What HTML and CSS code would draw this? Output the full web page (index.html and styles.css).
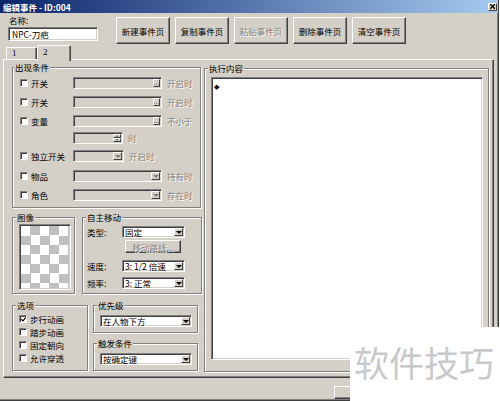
FILE: index.html
```html
<!DOCTYPE html>
<html lang="zh">
<head>
    <meta charset="UTF-8">
    <title>编辑事件</title>
    <link rel="stylesheet" href="styles.css">
</head>
<body>

<div class="window">
    <div class="titlebar">
        <span class="title">编辑事件 - ID:004</span>
        <span class="close-btn">
            <svg width="5" height="5" viewBox="0 0 5 5"><path d="M0 0L5 5M5 0L0 5" stroke="#000" stroke-width="1.3"/></svg>
        </span>
    </div>

    <!-- name + page buttons -->
    <div class="header">
        <div class="name-block">
            <div class="name-label">名称:</div>
            <div class="sunken name-input">NPC-刀疤</div>
        </div>
        <div class="page-buttons">
            <div class="btn page-btn">新建事件页</div>
            <div class="btn page-btn">复制事件页</div>
            <div class="btn page-btn disabled">粘贴事件页</div>
            <div class="btn page-btn">删除事件页</div>
            <div class="btn page-btn">清空事件页</div>
        </div>
    </div>

    <div class="tabs">
        <div class="tab">1</div>
        <div class="tab active">2</div>
    </div>

    <div class="panel">
        <div class="left-col">
            <fieldset class="group cond-group">
                <legend>出现条件</legend>
                <div class="cond-body">
                    <div class="cond-row">
                        <span class="chk-label"><span class="chk"></span>开关</span>
                        <div class="sunken combo off wide"><span class="val"></span><span class="drop dots"></span></div>
                        <span class="note disabled">开启时</span>
                    </div>
                    <div class="cond-row gap7">
                        <span class="chk-label"><span class="chk"></span>开关</span>
                        <div class="sunken combo off wide"><span class="val"></span><span class="drop dots"></span></div>
                        <span class="note disabled">开启时</span>
                    </div>
                    <div class="cond-row gap7">
                        <span class="chk-label"><span class="chk"></span>变量</span>
                        <div class="sunken combo off wide"><span class="val"></span><span class="drop dots"></span></div>
                        <span class="note disabled">不小于</span>
                    </div>
                    <div class="cond-row gap5 indent">
                        <div class="sunken spin off"><span class="val"></span><span class="spin-btns"><span class="spin-btn up"></span><span class="spin-btn down"></span></span></div>
                        <span class="note disabled">时</span>
                    </div>
                    <div class="cond-row gap6">
                        <span class="chk-label"><span class="chk"></span>独立开关</span>
                        <div class="sunken combo off short"><span class="val"></span><span class="drop"></span></div>
                        <span class="note disabled">开启时</span>
                    </div>
                    <div class="cond-row gap8">
                        <span class="chk-label"><span class="chk"></span>物品</span>
                        <div class="sunken combo off wide"><span class="val"></span><span class="drop"></span></div>
                        <span class="note disabled">持有时</span>
                    </div>
                    <div class="cond-row gap7">
                        <span class="chk-label"><span class="chk"></span>角色</span>
                        <div class="sunken combo off wide"><span class="val"></span><span class="drop"></span></div>
                        <span class="note disabled">存在时</span>
                    </div>
                </div>
            </fieldset>

            <div class="mid-row">
                <fieldset class="group image-group">
                    <legend>图像</legend>
                    <div class="image-body">
                        <div class="sunken checker"></div>
                    </div>
                </fieldset>

                <fieldset class="group move-group">
                    <legend>自主移动</legend>
                    <div class="move-body">
                        <div class="move-row">
                            <span class="move-label">类型:</span>
                            <div class="sunken combo move-combo"><span class="val">固定</span><span class="drop"></span></div>
                        </div>
                        <div class="btn route-btn disabled">移动路线...</div>
                        <div class="move-row gap7">
                            <span class="move-label">速度:</span>
                            <div class="sunken combo move-combo"><span class="val">3: 1/2 倍速</span><span class="drop"></span></div>
                        </div>
                        <div class="move-row gap5">
                            <span class="move-label">频率:</span>
                            <div class="sunken combo move-combo"><span class="val">3: 正常</span><span class="drop"></span></div>
                        </div>
                    </div>
                </fieldset>
            </div>

            <div class="bottom-row">
                <fieldset class="group options-group">
                    <legend>选项</legend>
                    <div class="options-body">
                        <div class="opt-row"><span class="chk checked"><svg width="5" height="5" viewBox="0 0 5 5"><path d="M0.3 2.2L2 3.9L4.7 0.6" fill="none" stroke="#000" stroke-width="1.2"/></svg></span>步行动画</div>
                        <div class="opt-row"><span class="chk"></span>踏步动画</div>
                        <div class="opt-row"><span class="chk"></span>固定朝向</div>
                        <div class="opt-row"><span class="chk"></span>允许穿透</div>
                    </div>
                </fieldset>

                <div class="stack">
                    <fieldset class="group small-group">
                        <legend>优先级</legend>
                        <div class="small-body">
                            <div class="sunken combo small-combo"><span class="val">在人物下方</span><span class="drop"></span></div>
                        </div>
                    </fieldset>
                    <fieldset class="group small-group trigger">
                        <legend>触发条件</legend>
                        <div class="small-body">
                            <div class="sunken combo small-combo"><span class="val">按确定键</span><span class="drop"></span></div>
                        </div>
                    </fieldset>
                </div>
            </div>
        </div>

        <fieldset class="group content-group">
            <legend>执行内容</legend>
            <div class="content-body">
                <div class="sunken command-list"><span class="mark">◆</span></div>
            </div>
        </fieldset>
    </div>

    <div class="footer">
        <div class="btn foot-btn">确定</div>
        <div class="btn foot-btn">取消</div>
    </div>
</div>

<div class="watermark">软件技巧</div>

</body>
</html>
```

FILE: styles.css
```css
* {
    box-sizing: border-box;
}

body {
    margin: 0;
    background-color: #fff;
    font-family: "Noto Sans CJK SC", "Liberation Sans", sans-serif;
    font-size: 8.5px;
    line-height: 10px;
    color: #000;
}

.window {
    width: 499px;
    height: 401px;
    background-color: #d4d0c8;
    border-right: 1px solid #404040;
    border-bottom: 1px solid #404040;
    box-shadow: inset -1px -1px 0 #808080;
    overflow: hidden;
}

.titlebar {
    height: 13px;
    display: flex;
    align-items: center;
    justify-content: space-between;
    padding: 0 1px 0 3px;
    background: linear-gradient(to right, #0a246a, #a6caf0);
    color: #fff;
    font-weight: bold;
}

.close-btn {
    width: 9px;
    height: 8px;
    display: flex;
    align-items: center;
    justify-content: center;
    background-color: #d4d0c8;
    border: 1px solid;
    border-color: #fff #404040 #404040 #fff;
}

/* classic 3d look */
.btn {
    display: flex;
    align-items: center;
    justify-content: center;
    background-color: #d4d0c8;
    border: 1px solid;
    border-color: #fff #404040 #404040 #fff;
    box-shadow: inset -1px -1px 0 #808080;
}

.sunken {
    border: 1px solid;
    border-color: #808080 #fff #fff #808080;
    box-shadow: inset 1px 1px 0 #404040, inset -1px -1px 0 #d4d0c8;
    background-color: #fff;
}

.disabled {
    color: #808080;
    text-shadow: 1px 1px 0 #fff;
}

.header {
    height: 32px;
    display: flex;
    padding: 2px 0 0 8px;
}

.name-block {
    width: 90px;
}

.name-label {
    height: 11px;
    padding-left: 1px;
}

.name-input {
    margin-top: 1px;
    height: 14px;
    padding: 1px 0 0 3px;
}

.page-buttons {
    display: flex;
    gap: 5px;
    margin-left: 18px;
    margin-top: 2px;
}

.page-btn {
    width: 54px;
    height: 27px;
}

.tabs {
    position: relative;
    z-index: 1;
    height: 14px;
    display: flex;
    align-items: flex-end;
    padding-left: 6px;
}

.tab {
    width: 31px;
    height: 12px;
    padding: 1px 0 0 5px;
    border: 1px solid;
    border-bottom: none;
    border-color: #fff #404040 transparent #fff;
    border-radius: 2px 2px 0 0;
    box-shadow: inset -1px 0 0 #808080;
    font-family: "Liberation Serif", serif;
    font-size: 9px;
    line-height: 9px;
}

.tab.active {
    width: 34px;
    height: 16px;
    margin-bottom: -2px;
    padding-top: 2px;
    background-color: #d4d0c8;
}

.panel {
    margin-left: 3px;
    width: 491px;
    height: 319px;
    display: flex;
    padding: 2px 0 0 8px;
    border: 1px solid;
    border-color: #fff #404040 #404040 #fff;
    box-shadow: inset -1px -1px 0 #808080;
}

.left-col {
    width: 190px;
}

.group {
    margin: 0;
    padding: 0;
    min-width: 0;
    border: 1px solid #808080;
    box-shadow: inset 1px 1px 0 #fff, 1px 1px 0 #fff;
}

.group legend {
    margin-left: 3px;
    padding: 0 1px;
    height: 10px;
    line-height: 10px;
    background-color: #d4d0c8;
}

.cond-group {
    width: 189px;
    height: 146px;
}

.cond-group legend {
    margin-left: 1px;
}

.cond-body {
    padding: 5px 0 0 7px;
}

.cond-row {
    display: flex;
    align-items: center;
    height: 12px;
}

.gap5 { margin-top: 5px; }
.gap6 { margin-top: 6px; }
.gap7 { margin-top: 7px; }
.gap8 { margin-top: 8px; }

.indent {
    padding-left: 53px;
}

.chk-label {
    width: 53px;
    display: flex;
    align-items: center;
}

.chk {
    width: 8px;
    height: 8px;
    margin-right: 3px;
    display: flex;
    align-items: center;
    justify-content: center;
    background-color: #fff;
    border: 1px solid;
    border-color: #808080 #fff #fff #808080;
    box-shadow: inset 1px 1px 0 #404040;
}

.note {
    margin-left: 5px;
}

.combo {
    height: 12px;
    display: flex;
}

.combo .val {
    flex: 1;
    padding-left: 2px;
    line-height: 10px;
    white-space: nowrap;
    overflow: hidden;
}

.combo .drop {
    width: 9px;
    margin: 1px 1px 1px 0;
    display: flex;
    align-items: center;
    justify-content: center;
    background-color: #d4d0c8;
    border: 1px solid;
    border-color: #fff #404040 #404040 #fff;
}

.combo .drop::after {
    content: "";
    border-top: 3px solid #000;
    border-left: 3px solid transparent;
    border-right: 3px solid transparent;
}

.combo .drop.dots {
    width: 7px;
}

.combo .drop.dots::after {
    border: none;
    width: 1px;
    height: 1px;
    background-color: #808080;
    box-shadow: -2px 0 0 #808080, 2px 0 0 #808080;
    margin-top: 3px;
}

.off {
    background-color: #d4d0c8;
}

.off .drop::after {
    border-top-color: #808080;
}

.wide {
    width: 89px;
}

.short {
    width: 51px;
}

.spin {
    width: 50px;
    height: 12px;
    display: flex;
}

.spin .val {
    flex: 1;
}

.spin-btns {
    width: 8px;
    margin: 1px 1px 1px 0;
    display: flex;
    flex-direction: column;
}

.spin-btn {
    flex: 1;
    display: flex;
    align-items: center;
    justify-content: center;
    background-color: #d4d0c8;
    border: 1px solid;
    border-color: #fff #404040 #404040 #fff;
}

.spin-btn.up::after {
    content: "";
    border-bottom: 2px solid #808080;
    border-left: 2px solid transparent;
    border-right: 2px solid transparent;
}

.spin-btn.down::after {
    content: "";
    border-top: 2px solid #808080;
    border-left: 2px solid transparent;
    border-right: 2px solid transparent;
}

.mid-row {
    display: flex;
    gap: 7px;
    margin-top: 4px;
}

.image-group {
    width: 63px;
    height: 82px;
}

.image-body {
    padding: 2px 0 0 6px;
}

.checker {
    width: 52px;
    height: 66px;
    background-color: #fff;
    background-image: repeating-conic-gradient(#c0c0c0 0 25%, #fff 0 50%);
    background-size: 19px 19px;
    background-position: 1px 1px;
}

.move-group {
    width: 120px;
    height: 82px;
}

.move-body {
    padding: 4px 0 0 4px;
}

.move-row {
    display: flex;
    align-items: center;
    height: 12px;
}

.move-label {
    width: 35px;
}

.move-combo {
    width: 63px;
}

.route-btn {
    width: 56px;
    height: 13px;
    margin: 2px 0 0 38px;
}

.bottom-row {
    display: flex;
    margin-top: 6px;
}

.options-group {
    width: 76px;
    height: 71px;
}

.options-body {
    padding: 4px 0 0 6px;
}

.opt-row {
    display: flex;
    align-items: center;
    height: 10px;
    margin-bottom: 3px;
}

.stack {
    margin-left: 5px;
}

.small-group {
    width: 105px;
    height: 33px;
}

.small-group.trigger {
    margin-top: 5px;
}

.small-body {
    padding: 5px 0 0 6px;
}

.small-combo {
    width: 92px;
}

.content-group {
    width: 285px;
    height: 309px;
    margin: 1px 0 0 2px;
}

.content-body {
    padding: 4px 0 0 6px;
}

.command-list {
    width: 272px;
    height: 283px;
    padding: 2px 0 0 2px;
}

.mark {
    font-family: "DejaVu Sans", sans-serif;
    font-size: 7px;
    line-height: 7px;
}

.footer {
    display: flex;
    justify-content: flex-end;
    gap: 6px;
    padding: 8px 8px 0 0;
}

.foot-btn {
    width: 75px;
    height: 13px;
}

.watermark {
    position: absolute;
    right: 0;
    bottom: 0;
    width: 150px;
    height: 74px;
    padding: 17px 0 0 4px;
    background-color: #fff;
    color: #c9c9c9;
    font-size: 35px;
    line-height: 35px;
}
```
